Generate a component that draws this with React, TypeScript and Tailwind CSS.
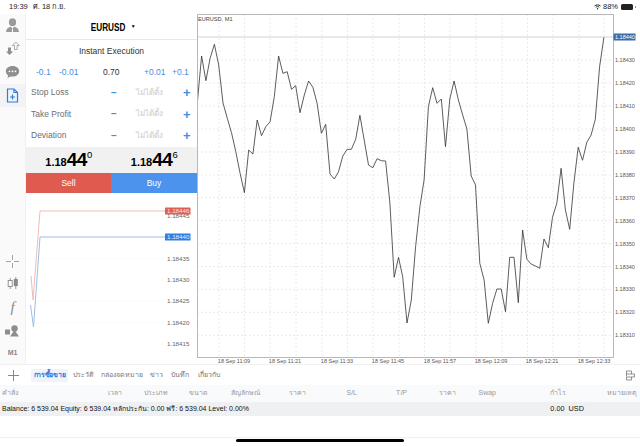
const font = { fontFamily: '"Liberation Sans", "Noto Sans", sans-serif' };

const px0 = 198.3;
const pxStep = 4.28;
const leftYs = [
  103, 56, 80.7, 58.3, 44.3, 65, 103, 118.3, 132.7, 151.7, 173.3, 192.7, 150, 154, 120, 135.7, 126.7, 121.7, 96.7,
  56, 73.3, 71.7, 89.3, 85.7, 112.7, 95, 81, 87.3, 103.3, 133.3, 124.3, 174, 179, 171.7, 156, 149.3, 149.3, 139.3,
  115.3, 140, 165, 167.7, 158.7, 160.7, 161, 203, 277.3, 257.3, 276.7, 323, 300, 246.7, 206.7, 180, 106.7, 87.7,
  103.3, 99, 146.7, 99, 81, 100, 115, 129, 176, 185, 263.3, 280, 323.3, 303.3, 289, 289, 311.7, 257.3, 257.3, 302.7,
  230, 259.3, 264, 266, 268.3, 239, 247.7, 217.3, 203.3, 168.3, 210, 229.3, 183, 147.3, 160.3, 142.3, 135, 119.3,
  66.7, 37.3,
];
const priceLine = leftYs.map((y, i) => `${(px0 + i * pxStep).toFixed(1)},${y - 14}`).join(" ");

const yTicks = [
  ["1.18430", 46],
  ["1.18420", 69],
  ["1.18410", 92],
  ["1.18400", 115],
  ["1.18390", 138],
  ["1.18380", 161],
  ["1.18370", 183.6],
  ["1.18360", 206.5],
  ["1.18350", 229.5],
  ["1.18340", 252.5],
  ["1.18330", 275.4],
  ["1.18320", 298.3],
  ["1.18310", 321.3],
] as const;
const xGrid = [220, 245.5, 271, 297, 323, 348.5, 374, 400, 425.5, 451, 477, 503, 528.5, 554, 580, 605];
const xTicks = [
  ["18 Sep 11:09", 235],
  ["18 Sep 11:21", 286],
  ["18 Sep 11:33", 338],
  ["18 Sep 11:45", 389],
  ["18 Sep 11:57", 441],
  ["18 Sep 12:09", 492],
  ["18 Sep 12:21", 543],
  ["18 Sep 12:33", 595],
] as const;

function MainChart() {
  return (
    <svg width={442} height={350} viewBox="198 0 442 350" className="block" fontFamily="Liberation Sans, sans-serif">
      {yTicks.map(([, y]) => (
        <line key={y} x1={198} x2={614} y1={y} y2={y} stroke="#e4e4e4" strokeWidth={0.8} strokeDasharray="2 2" />
      ))}
      {xGrid.map((x) => (
        <line key={x} x1={x} x2={x} y1={0} y2={343} stroke="#e4e4e4" strokeWidth={0.8} strokeDasharray="2 2" />
      ))}
      <line x1={198} x2={614} y1={23} y2={23} stroke="#c3c8d6" strokeWidth={0.8} />
      <polyline points={priceLine} fill="none" stroke="#333" strokeWidth={0.8} />
      <path d="M198.5 343V0.5H614.5V343.5H198" fill="none" stroke="#b8b8b8" strokeWidth={1} />
      <text x={199} y={6.5} fontSize={5.6} fill="#444">EURUSD, M1</text>
      {yTicks.map(([label, y]) => (
        <text key={label} x={616} y={y + 2} fontSize={5.5} fill="#555">{label}</text>
      ))}
      <rect x={614.5} y={19.5} width={22} height={7} fill="#3d6da8" />
      <text x={616} y={25.3} fontSize={5.5} fill="#fff">1.18440</text>
      {xTicks.map(([label, x]) => (
        <text key={label} x={x} y={349} fontSize={5.5} fill="#555" textAnchor="middle">{label}</text>
      ))}
    </svg>
  );
}

function MiniChart() {
  const ticks = [
    ["1.18445", 216],
    ["1.18435", 258.5],
    ["1.18430", 280],
    ["1.18425", 301],
    ["1.18420", 322.5],
    ["1.18415", 344],
  ] as const;
  return (
    <svg width={171} height={171} viewBox="26 193 171 171" className="block" fontFamily="Liberation Sans, sans-serif">
      {ticks.map(([, y]) => (
        <line key={y} x1={30} x2={165} y1={y} y2={y} stroke="#e8e8e8" strokeWidth={0.7} strokeDasharray="1 3" />
      ))}
      {ticks.map(([label, y]) => (
        <text key={label} x={167} y={y + 2.2} fontSize={6.2} fill="#666">{label}</text>
      ))}
      <polyline points="31,276 33,300 40,211 166,211" fill="none" stroke="#f0bdb5" strokeWidth={1} />
      <polyline points="30.5,305 33.5,327 40,237 166,237" fill="none" stroke="#9dbde8" strokeWidth={1} />
      <rect x={165} y={207.5} width={25.5} height={7} rx={0.5} fill="#dd5e54" />
      <text x={167} y={213.2} fontSize={6.2} fill="#fbe4e0">1.18446</text>
      <rect x={165} y={233.5} width={25.5} height={7} rx={0.5} fill="#2f7ee0" />
      <text x={167} y={239.2} fontSize={6.2} fill="#e6f0fc">1.18440</text>
    </svg>
  );
}

function Stepper({ label }: { label: string }) {
  return (
    <div className="flex h-[21.5px] items-center">
      <span className="w-[85px] pl-[5px] text-[8.5px] text-[#6e6e6e]">{label}</span>
      <span className="w-[14px] text-[10px] font-bold leading-none text-[#3f8ee8]">−</span>
      <span className="w-[49px] text-center text-[8px] text-[#c9c9c9]">ไม่ได้ตั้ง</span>
      <span className="ml-[9px] text-[13px] font-bold leading-none text-[#3f8ee8]">+</span>
    </div>
  );
}

function Price({ value, big, small }: { value: string; big: string; small: string }) {
  return (
    <div className="flex flex-1 items-start justify-center pt-[3px] font-bold leading-none text-black">
      <span className="mt-[7px] text-[11px]">{value}</span>
      <span className="text-[19px] leading-[19px] tracking-[-0.5px]">{big}</span>
      <span className="text-[9.5px] font-normal">{small}</span>
    </div>
  );
}

function Sidebar() {
  return (
    <div className="flex w-[26px] flex-col items-center border-r border-[#f0f0f0] bg-[#fafafa]">
      <div className="flex h-[22px] w-full items-center justify-center">
        <svg width={15} height={15} viewBox="0 0 15 15" fill="#9a9a9a">
          <ellipse cx={7.5} cy={4.2} rx={3.6} ry={4} />
          <path d="M1 14c.2-3.300 2.500-5 4.800-5.300l1.700 2 1.700-2C11.500 9 13.800 10.700 14 14z" />
          <path d="M7 11h1v3H7z" fill="#fafafa" />
        </svg>
      </div>
      <div className="flex h-[24px] w-full items-center justify-center">
        <svg width={15} height={15} viewBox="0 0 15 15">
          <path d="M3 6.500h3v4h2.200L4.500 14 1 10.500h2z" fill="#8e8e8e" />
          <path d="M9.500 8.500v-4H7.300L10.800 1l3.500 3.500h-2.200v4z" fill="none" stroke="#9a9a9a" strokeWidth={0.8} />
        </svg>
      </div>
      <div className="flex h-[24px] w-full items-center justify-center">
        <svg width={15} height={14} viewBox="0 0 15 14">
          <path d="M7.500 1C3.600 1 .8 3.300.8 6.300c0 1.700.9 3.100 2.300 4.100L2.500 13l3-1.600c.6.100 1.300.200 2 .200 3.900 0 6.700-2.300 6.700-5.300S11.400 1 7.500 1z" fill="#8f8f8f" />
          <circle cx={4.500} cy={6.300} r={0.9} fill="#fff" />
          <circle cx={7.500} cy={6.300} r={0.9} fill="#fff" />
          <circle cx={10.500} cy={6.300} r={0.9} fill="#fff" />
        </svg>
      </div>
      <div className="flex h-[23px] w-full items-center justify-center bg-[#f3f3f5]">
        <svg width={13} height={15} viewBox="0 0 13 15" fill="none" stroke="#2b7de0" strokeWidth={1.2}>
          <path d="M1.500 1h6.500l3.500 3.500V14h-10z" />
          <path d="M8 1v3.500h3.500M6.500 6.500v5M4 9h5" />
        </svg>
      </div>
      <div className="mt-auto flex h-[22px] w-full items-center justify-center">
        <svg width={13} height={13} viewBox="0 0 13 13" stroke="#9a9a9a" strokeWidth={0.9}>
          <path d="M0 6.500h5M8 6.500h5M6.500 0v5M6.500 8v5" />
        </svg>
      </div>
      <div className="flex h-[23px] w-full items-center justify-center">
        <svg width={12} height={13} viewBox="0 0 12 13">
          <path d="M3.200 1v11M8.800 0v12" stroke="#888" strokeWidth={0.9} />
          <rect x={1.200} y={3.500} width={4} height={6} fill="#fff" stroke="#888" strokeWidth={0.9} />
          <rect x={6.800} y={2} width={4} height={7} fill="#888" />
        </svg>
      </div>
      <div className="flex h-[25px] w-full items-center justify-center font-['Liberation_Serif'] text-[15px] italic leading-none text-[#8a8a8a]">
        f
      </div>
      <div className="flex h-[22px] w-full items-center justify-center">
        <svg width={15} height={12} viewBox="0 0 15 12" fill="#8d8d8d">
          <rect x={0} y={4.500} width={5} height={5} />
          <circle cx={9.500} cy={3.500} r={3.200} />
          <path d="M9.500 5 14 11.500H5z" />
        </svg>
      </div>
      <div className="flex h-[22px] w-full items-center justify-center pt-[1px] text-[7px] font-bold text-[#888]">M1</div>
    </div>
  );
}

function TradePanel() {
  return (
    <div className="flex w-[171px] flex-col bg-white">
      <div className="flex h-[26px] items-center justify-center gap-[1px] border-b border-[#e8e8e8] pt-[1px] text-[10px] font-bold text-black">
        <span className="inline-block origin-center scale-x-[0.82]">EURUSD</span>
        <span className="text-[5px]">▼</span>
      </div>
      <div className="pt-[5px] text-center text-[8.5px] leading-[12px] text-[#333]">Instant Execution</div>
      <div className="mt-[9px] flex h-[12px] items-center text-[8.5px] text-[#3f8ee8]">
        <span className="ml-[10px] w-[23px]">-0.1</span>
        <span className="w-[44px]">-0.01</span>
        <span className="w-[41px] text-[#333]">0.70</span>
        <span className="w-[28px]">+0.01</span>
        <span>+0.1</span>
      </div>
      <div className="mt-[4px]">
        <Stepper label="Stop Loss" />
        <Stepper label="Take Profit" />
        <Stepper label="Deviation" />
      </div>
      <div className="mt-[0.5px] flex h-[26px] bg-[#f1f1f1]">
        <Price value="1.18" big="44" small="0" />
        <Price value="1.18" big="44" small="6" />
      </div>
      <div className="flex h-[20px] text-[8.5px] text-white">
        <div className="flex w-[85px] items-center justify-center bg-[#e05b4f]">Sell</div>
        <div className="flex flex-1 items-center justify-center bg-[#4b93ec]">Buy</div>
      </div>
      <MiniChart />
    </div>
  );
}

export default function App() {
  const tabs = [
    ["ประวัติ", "w-[28px]"],
    ["กล่องจดหมาย", "w-[49px]"],
    ["ข่าว", "w-[21px]"],
    ["บันทึก", "w-[27px]"],
    ["เกี่ยวกับ", "w-[24px]"],
  ];
  const columns = [
    ["คำสั่ง", "w-[75px] pl-[2px]"],
    ["เวลา", "w-[47px] text-right"],
    ["ประเภท", "w-[46px] text-right"],
    ["ขนาด", "w-[40px] text-right"],
    ["สัญลักษณ์", "w-[52px] text-right"],
    ["ราคา", "w-[46px] text-right"],
    ["S/L", "w-[51px] text-right"],
    ["T/P", "w-[50px] text-right"],
    ["ราคา", "w-[49px] text-right"],
    ["Swap", "w-[40px] text-right"],
    ["กำไร", "w-[70px] text-right"],
    ["หมายเหตุ", "flex-1 text-right pr-[3px]"],
  ];
  return (
    <div className="flex h-[447px] w-[640px] flex-col overflow-hidden bg-white" style={font}>
      {/* Status bar */}
      <div className="flex h-[14px] items-center justify-between pl-[9px] pr-[3px] text-[7.5px] text-[#222]">
        <div className="flex gap-[5px]">
          <span>19:39</span>
          <span>ศ. 18 ก.ย.</span>
        </div>
        <div className="flex items-center gap-[2px]">
          <svg width={7} height={6} viewBox="0 0 14 11" fill="none" stroke="#222" strokeWidth={2}>
            <path d="M1 3.500c3.500-3 8.500-3 12 0M3.500 6c2-1.700 5-1.700 7 0" />
            <circle cx={7} cy={9} r={1.300} fill="#222" stroke="none" />
          </svg>
          <span>88%</span>
          <span className="ml-[1px] h-[6px] w-[12px] rounded-[1.5px] bg-[#222]" />
          <span className="mr-[1px] h-[2px] w-[1px] bg-[#999]" />
        </div>
      </div>

      {/* Workspace */}
      <div className="flex h-[350px]">
        <Sidebar />
        <TradePanel />
        <MainChart />
      </div>

      {/* Toolbox tabs */}
      <div className="flex h-[21px] items-center border-t border-[#f0f0f0] pt-[1px] text-[7px] text-[#777]">
        <span className="flex w-[26px] justify-center">
          <svg width={11} height={11} viewBox="0 0 11 11" stroke="#888" strokeWidth={1}>
            <path d="M0 5.500h11M5.500 0v11" />
          </svg>
        </span>
        <span className="ml-[5px] w-[37px] rounded-[1px] bg-[#f0f4fa] py-[1px] text-center font-bold tracking-[-0.3px] text-[#2b7de0]">
          การซื้อขาย
        </span>
        <div className="ml-[5px] flex">
          {tabs.map(([t, cls]) => (
            <span key={t} className={cls}>{t}</span>
          ))}
        </div>
        <svg width={11} height={11} viewBox="0 0 11 11" fill="none" stroke="#777" strokeWidth={0.8} className="ml-auto mr-[4px]">
          <path d="M1.500 1h5v3h-5zM1.500 4v2.500M9.500 7h-8v3h5V7M6.500 4h3v3" />
        </svg>
      </div>

      {/* Column headers */}
      <div className="flex h-[17px] items-center bg-[#f9fafc] text-[7px] text-[#999]">
        {columns.map(([label, cls], i) => (
          <span key={i} className={cls}>{label}</span>
        ))}
      </div>

      {/* Balance */}
      <div className="flex h-[14px] items-center bg-[#eff0f1] pl-[2px] text-[7px] text-[#111]">
        <span>Balance: 6 539.04 Equity: 6 539.04 หลักประกัน: 0.00 ฟรี: 6 539.04 Level: 0.00%</span>
        <span className="ml-auto mr-[56px] text-[7.300px]">0.00&nbsp;&nbsp;USD</span>
      </div>

      {/* Home indicator */}
      <div className="mt-[21px] flex flex-1 justify-center border-t border-[#f1f1f1]">
        <div className="mt-[1px] h-[3px] w-[168px] rounded-full bg-black" />
      </div>
    </div>
  );
}
